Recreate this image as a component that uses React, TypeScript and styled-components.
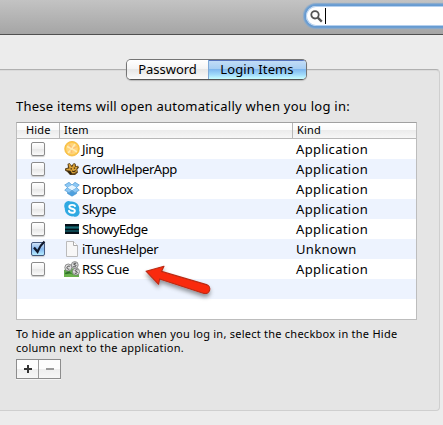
import React from "react";
import styled, { createGlobalStyle } from "styled-components";

const GlobalStyle = createGlobalStyle`
  * { box-sizing: border-box; }
  body { margin: 0; background: #ececec; overflow: hidden; }
`;

const Window = styled.div`
  position: relative;
  width: 443px;
  height: 425px;
  overflow: hidden;
  background: #ececec;
  color: #000;
  font-family: "Noto Sans", "Open Sans", sans-serif;
  font-size: 13px;
`;

const Toolbar = styled.header`
  height: 35px;
  padding: 6px 0 0 306px;
  background: linear-gradient(#c3c3c3, #a5a5a5);
  border-bottom: 1px solid #505050;
`;

const SearchField = styled.div`
  display: flex;
  width: 160px;
  height: 20px;
  padding: 2px 0 0 4px;
  border-radius: 10px;
  background: #fff;
  box-shadow: inset 0 0 0 1px #b4d0ef, 0 0 0 1px #679bd1, 0 0 0 2px #6d9fd2, 0 0 1px 3px #87a9cc;
`;

const Caret = styled.span`
  width: 1px;
  height: 16px;
  margin-left: 2px;
  background: #000;
`;

const Panel = styled.main`
  display: flex;
  flex-direction: column;
  align-items: flex-start;
  width: 445px;
  height: 342px;
  margin: 34px 0 0 -5px;
  padding-left: 20px;
  background: #e5e5e5;
  border: 1px solid #cfcfcf;
  border-top: 1px solid #b0b0b0;
  border-radius: 4px;
  box-shadow: inset 0 1px #dadada;
`;

const Tabs = styled.nav`
  display: flex;
  width: 181px;
  height: 21px;
  margin: -11px 0 0 110px;
  border: 1px solid #747474;
  border-bottom-color: #555;
  border-radius: 5px;
  overflow: hidden;
  box-shadow: 0 1px 1px #bbb;
`;

const Tab = styled.button<{ $active?: boolean }>`
  width: ${(p) => (p.$active ? 98 : 81)}px;
  padding: 0;
  border: 0;
  font: 13px/19px "Noto Sans", sans-serif;
  letter-spacing: ${(p) => (p.$active ? 0.1 : -0.05)}px;
  text-align: center;
  color: #000;
  box-shadow: ${(p) => (p.$active ? "inset 1px 0 #7fa9d6, inset 0 1px #5573bd" : "none")};
  background: ${(p) =>
    p.$active
      ? "linear-gradient(#c5def7 0%, #a6cef3 48%, #7fb8ef 50%, #a2dcfb 78%, #caffff 100%)"
      : "linear-gradient(#fff 0%, #f4f4f4 48%, #e7e7e7 50%, #fbfbfb 100%)"};
`;

const Intro = styled.p`
  height: 20px;
  margin: 16px 0 6px;
  line-height: 20px;
  letter-spacing: 0.25px;
  white-space: nowrap;
`;

const Table = styled.section`
  width: 401px;
  height: 198px;
  border: 1px solid #bdbdbd;
  border-top-color: #a0a0a0;
  background: #fff;
`;

const Columns = styled.div`
  display: grid;
  grid-template-columns: 42px 233px 1fr;
`;

const HeaderRow = styled(Columns)`
  height: 16px;
  border-bottom: 1px solid #b8b8b8;
  background: linear-gradient(#fff 0%, #fbfbfb 45%, #ececec 50%, #f7f7f7 100%);
  font-size: 11px;
  line-height: 14px;
`;

const HeaderCell = styled.span`
  padding-left: 4px;
  letter-spacing: 0.15px;
  & + & { border-left: 1px solid #b8b8b8; }
  &:first-child { padding-left: 9px; }
`;

const Row = styled(Columns)`
  height: 20px;
  line-height: 20px;
  &:nth-child(odd) { background: #edf3fe; }
`;

const CheckCell = styled.div`
  padding: 3px 0 0 14px;
`;

const Checkbox = styled.div<{ $checked?: boolean }>`
  width: 14px;
  height: 14px;
  border: 1px solid ${(p) => (p.$checked ? "#43587f" : "#8c8c8c")};
  border-radius: 2px;
  box-shadow: 0 1px 1px #ccc;
  background: ${(p) =>
    p.$checked
      ? "linear-gradient(#cfe2f8, #84b6ee 50%, #b5ecff)"
      : "linear-gradient(#fff, #f1f1f1 50%, #e7e7e7 55%, #fafafa)"};
  svg { display: block; margin: -3px 0 0 0; overflow: visible; }
`;

const ItemCell = styled.div`
  display: flex;
  gap: 2px;
  padding: 0 0 0 5px;
  white-space: nowrap;
  svg { flex: none; margin-top: 2px; }
`;

const Label = styled.span<{ $spacing: number }>`
  letter-spacing: ${(p) => p.$spacing}px;
`;

const KindCell = styled.div`
  padding-left: 4px;
  letter-spacing: 0.32px;
`;

const Hint = styled.p`
  margin: 7px 0 0;
  font-size: 11px;
  line-height: 14px;
  letter-spacing: 0.245px;
  white-space: nowrap;
`;

const ButtonGroup = styled.div`
  display: flex;
  width: 45px;
  height: 20px;
  margin-top: 4px;
  border: 1px solid #8d8d8d;
  background: linear-gradient(#fdfdfd 50%, #eeeeee 50%, #f6f6f6);
  box-shadow: 0 1px #f4f4f4;
`;

const SmallButton = styled.button`
  display: grid;
  place-items: center;
  flex: 1;
  padding: 0;
  border: 0;
  background: none;
  & + & { border-left: 1px solid #999; }
`;

const Pointer = styled.svg`
  position: absolute;
  left: 140px;
  top: 258px;
`;

const JingIcon = () => (
  <svg width="16" height="16" viewBox="0 0 16 16">
    <circle cx="8" cy="7.7" r="7.3" fill="#fcc84a" stroke="#f4b436" strokeWidth=".8" />
    <circle cx="8" cy="7.7" r="5.8" fill="#ffd47a" />
    <path d="M3 5.5l5 2.2L13 11M11 3L8 7.7 4 12" stroke="#ffecb4" strokeWidth="1.6" fill="none" />
    <path d="M5 3.5l2.5 3M9 7.2l4-1.7M7 9l1 3" stroke="#fbbd75" strokeWidth="1.2" />
  </svg>
);

const GrowlIcon = () => (
  <svg width="16" height="16" viewBox="0 0 16 16">
    <path d="M1 7.5l3-1-.5-3.5 2-1 2 2.5L10 2l1.7 1 .3 2 2-.3 1 1.8-1.7 2 .7 3-3 2.5H6L3.3 11 1 9.5z" fill="#5c431d" />
    <path d="M4.5 3.3l1.2-.2L7.5 6 9 5.3l.3-2 1.3-.2L11 6l2.8-.4-1.5 2.5.6 2.4-2.5 1.7H8l-1.4-2.4L2.3 9l.2-1 3-.5z" fill="#dca338" />
    <path d="M6.5 7.8h1.4M9.8 7.2h1.4M8 10l2 .7 1.7-1.2" fill="none" stroke="#3e2c10" strokeWidth="1.2" />
    <path d="M3.5 10l3 .5 1.5 2.7H6z" fill="#30240f" />
  </svg>
);

const DropboxIcon = () => (
  <svg width="16" height="16" viewBox="0 0 16 16">
    <g fill="#8cc8f5" stroke="#418fcb" strokeWidth=".6" strokeLinejoin="round">
      <path d="M.7 4L5 1.3 8 4 3.5 6.6zM8 4l3-2.7L15.3 4l-2.8 2.6zM.7 9.2l2.8-2.6L8 9.3l-3.2 2.5zM8 9.3l4.5-2.7 2.8 2.6-4.1 2.6z" />
      <path d="M3.5 11.2l1.5 1 3-2.5 3.2 2.5 1.4-1v1.3L8 15.2l-4.5-2.7z" fill="#4ca0df" />
    </g>
    <path d="M3.5 6.6L8 4l4.5 2.6L8 9.3z" fill="#e6f5ff" />
  </svg>
);

const SkypeIcon = () => (
  <svg width="16" height="16" viewBox="0 0 16 16">
    <path d="M.3 4.5A4.3 4.3 0 0 1 6.7.6a7.4 7.4 0 0 1 8.4 8.8 4.4 4.4 0 0 1-5.9 5.9A7.4 7.4 0 0 1 .8 7.2a4 4 0 0 1-.5-2.7z" fill="#2fa9e2" />
    <path d="M11 5.2C10.6 3.5 5.3 3.2 5.3 5.7c0 2.7 5.6 1.3 5.6 4.2 0 2.7-5.3 2.4-6-.1" fill="none" stroke="#fff" strokeWidth="1.9" strokeLinecap="round" />
  </svg>
);

const ShowyIcon = () => (
  <svg width="16" height="16" viewBox="0 0 16 16">
    <path fill="#051019" d="M1 3h14v10H1z" />
    <path fill="#0c4650" d="M1 5h14v3H1z" />
    <path fill="#176a73" d="M1 6h14v1H1z" />
    <path fill="#0d4650" d="M1 9h14v2H1z" />
  </svg>
);

const FileIcon = () => (
  <svg width="16" height="16" viewBox="0 0 16 16">
    <path d="M2.5.5h7l4 4v11h-11z" fill="#f7f7f7" stroke="#bbb" />
    <path d="M9.5.5v4h4" fill="#fff" stroke="#aaa" />
  </svg>
);

const RssIcon = () => (
  <svg width="16" height="16" viewBox="0 0 16 16">
    <path fill="#63a94f" d="M0 9l5-2 10 1v8H0z" />
    <path fill="#2f7229" d="M1 12l4-2 5 5H2z" />
    <path fill="#6bb34d" d="M0 13.5l6-1 9 3.5H0z" />
    <g fill="#ddd" stroke="#777" strokeWidth=".8">
      <circle cx="4.3" cy="6.5" r="3.5" />
      <circle cx="10.8" cy="4" r="3.4" />
      <circle cx="12" cy="10.6" r="3.5" />
    </g>
    <g fill="none" stroke="#444" strokeWidth="1">
      <path d="M5.8 5.2c-3.6-.7-3.8 3.3-.5 3M12.2 2.3c-3.4-.5-3 1.6-1.2 1.6s1.2 2.4-1.7 1.7M13.5 8.8c-3.2-.4-2.6 1.7-1.1 1.7s1.2 2.4-1.7 1.7" />
    </g>
  </svg>
);

const items = [
  { name: "Jing", icon: <JingIcon />, kind: "Application", spacing: -0.3 },
  { name: "GrowlHelperApp", icon: <GrowlIcon />, kind: "Application", spacing: -0.45 },
  { name: "Dropbox", icon: <DropboxIcon />, kind: "Application", spacing: -0.3 },
  { name: "Skype", icon: <SkypeIcon />, kind: "Application", spacing: -0.4 },
  { name: "ShowyEdge", icon: <ShowyIcon />, kind: "Application", spacing: -0.52 },
  { name: "iTunesHelper", icon: <FileIcon />, kind: "Unknown", spacing: -0.35, hidden: true },
  { name: "RSS Cue", icon: <RssIcon />, kind: "Application", spacing: -0.32 },
];

export default function App() {
  return (
    <Window>
      <GlobalStyle />
      <Toolbar>
        <SearchField>
          <svg width="13" height="16" viewBox="0 0 13 16" fill="none" stroke="#555">
            <circle cx="5" cy="6.8" r="3.7" strokeWidth="1.8" />
            <path d="M7.8 9.6l4 4" strokeWidth="2.2" />
          </svg>
          <Caret />
        </SearchField>
      </Toolbar>
      <Panel>
        <Tabs>
          <Tab>Password</Tab>
          <Tab $active>Login Items</Tab>
        </Tabs>
        <Intro>These items will open automatically when you log in:</Intro>
        <Table>
          <HeaderRow>
            <HeaderCell>Hide</HeaderCell>
            <HeaderCell>Item</HeaderCell>
            <HeaderCell>Kind</HeaderCell>
          </HeaderRow>
          {items.map((item) => (
            <Row key={item.name}>
              <CheckCell>
                <Checkbox $checked={item.hidden}>
                  {item.hidden && (
                    <svg width="14" height="15" viewBox="0 0 14 15">
                      <path d="M2 7.5l3.5 4.2Q8 5.5 12.5 1.5" fill="none" stroke="#10182c" strokeWidth="2.3" />
                    </svg>
                  )}
                </Checkbox>
              </CheckCell>
              <ItemCell>
                {item.icon}
                <Label $spacing={item.spacing}>{item.name}</Label>
              </ItemCell>
              <KindCell>{item.kind}</KindCell>
            </Row>
          ))}
          <Row />
          <Row />
        </Table>
        <Hint>
          To hide an application when you log in, select the checkbox in the Hide
          <br />
          column next to the application.
        </Hint>
        <ButtonGroup>
          <SmallButton aria-label="Add">
            <svg width="8" height="8" viewBox="0 0 8 8">
              <path d="M4 0v8M0 4h8" stroke="#333" strokeWidth="2" />
            </svg>
          </SmallButton>
          <SmallButton aria-label="Remove">
            <svg width="8" height="8" viewBox="0 0 8 8">
              <path d="M0 4h8" stroke="#999" strokeWidth="2" />
            </svg>
          </SmallButton>
        </ButtonGroup>
      </Panel>
      <Pointer width="80" height="45" viewBox="0 0 80 45">
        <defs>
          <filter id="shadow" x="-20%" y="-20%" width="150%" height="160%">
            <feDropShadow dx="0" dy="3" stdDeviation="2" floodOpacity=".4" />
          </filter>
        </defs>
        <path
          d="M6 13.2L24 8.2l-2.5 5.2 45 13.2a4.5 4.5 0 0 1-2.4 8.8L19.6 21l-1 5.3z"
          fill="#f92a08"
          stroke="#ba2b16"
          strokeWidth="1.1"
          strokeLinejoin="round"
          filter="url(#shadow)"
        />
      </Pointer>
    </Window>
  );
}
